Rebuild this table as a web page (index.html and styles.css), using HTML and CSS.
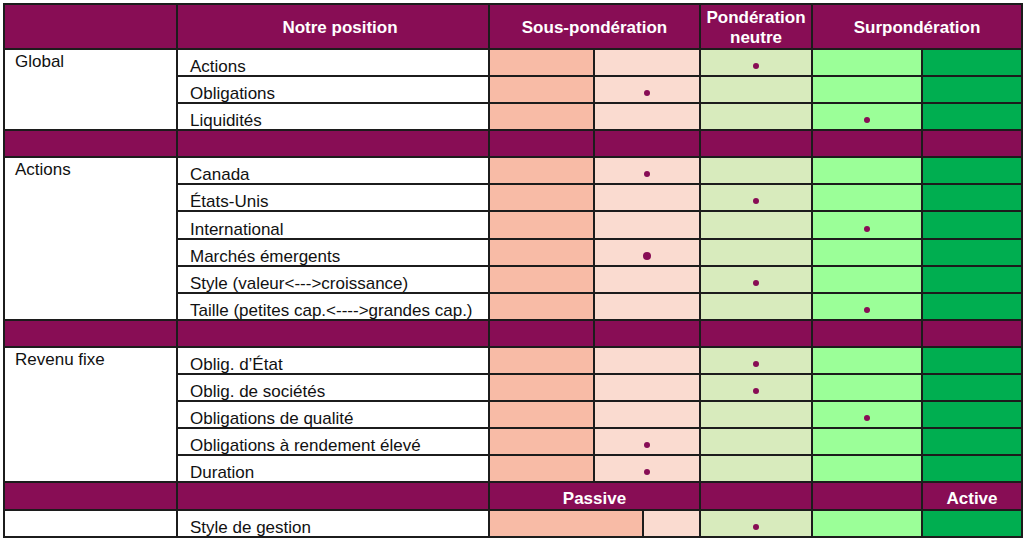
FILE: index.html
```html
<!DOCTYPE html>
<html lang="fr">
<head>
<meta charset="utf-8">
<title>Notre position</title>
<link rel="stylesheet" href="styles.css">
</head>
<body>
<table class="grid">
  <colgroup>
    <col class="c-sec"><col class="c-item"><col class="c-s1"><col class="c-s2"><col class="c-n"><col class="c-o1"><col class="c-o2">
  </colgroup>
  <thead>
    <tr class="head">
      <th></th>
      <th class="h-pos">Notre position</th>
      <th colspan="2">Sous-pondération</th>
      <th>Pondération<br>neutre</th>
      <th colspan="2">Surpondération</th>
    </tr>
  </thead>
  <tbody>
    <tr><td class="sec" rowspan="3">Global</td><td class="item">Actions</td><td class="s1"></td><td class="s2"></td><td class="n"><span class="dot"></span></td><td class="o1"></td><td class="o2"></td></tr>
    <tr><td class="item">Obligations</td><td class="s1"></td><td class="s2"><span class="dot"></span></td><td class="n"></td><td class="o1"></td><td class="o2"></td></tr>
    <tr><td class="item">Liquidités</td><td class="s1"></td><td class="s2"></td><td class="n"></td><td class="o1"><span class="dot"></span></td><td class="o2"></td></tr>
    <tr class="bar"><td></td><td></td><td></td><td></td><td></td><td></td><td></td></tr>

    <tr><td class="sec" rowspan="6">Actions</td><td class="item">Canada</td><td class="s1"></td><td class="s2"><span class="dot"></span></td><td class="n"></td><td class="o1"></td><td class="o2"></td></tr>
    <tr><td class="item">États-Unis</td><td class="s1"></td><td class="s2"></td><td class="n"><span class="dot"></span></td><td class="o1"></td><td class="o2"></td></tr>
    <tr class="tall"><td class="item">International</td><td class="s1"></td><td class="s2"></td><td class="n"></td><td class="o1"><span class="dot"></span></td><td class="o2"></td></tr>
    <tr><td class="item">Marchés émergents</td><td class="s1"></td><td class="s2"><span class="dot big"></span></td><td class="n"></td><td class="o1"></td><td class="o2"></td></tr>
    <tr><td class="item">Style (valeur&lt;---&gt;croissance)</td><td class="s1"></td><td class="s2"></td><td class="n"><span class="dot"></span></td><td class="o1"></td><td class="o2"></td></tr>
    <tr><td class="item">Taille (petites cap.&lt;----&gt;grandes cap.)</td><td class="s1"></td><td class="s2"></td><td class="n"></td><td class="o1"><span class="dot"></span></td><td class="o2"></td></tr>
    <tr class="bar"><td></td><td></td><td></td><td></td><td></td><td></td><td></td></tr>

    <tr><td class="sec" rowspan="5">Revenu fixe</td><td class="item">Oblig. d’État</td><td class="s1"></td><td class="s2"></td><td class="n"><span class="dot"></span></td><td class="o1"></td><td class="o2"></td></tr>
    <tr><td class="item">Oblig. de sociétés</td><td class="s1"></td><td class="s2"></td><td class="n"><span class="dot"></span></td><td class="o1"></td><td class="o2"></td></tr>
    <tr><td class="item">Obligations de qualité</td><td class="s1"></td><td class="s2"></td><td class="n"></td><td class="o1"><span class="dot"></span></td><td class="o2"></td></tr>
    <tr><td class="item">Obligations à rendement élevé</td><td class="s1"></td><td class="s2"><span class="dot"></span></td><td class="n"></td><td class="o1"></td><td class="o2"></td></tr>
    <tr><td class="item">Duration</td><td class="s1"></td><td class="s2"><span class="dot"></span></td><td class="n"></td><td class="o1"></td><td class="o2"></td></tr>
    <tr class="bar labels tall"><td></td><td></td><td colspan="2">Passive</td><td></td><td></td><td>Active</td></tr>

    <tr class="last"><td class="sec"></td><td class="item">Style de gestion</td><td class="split" colspan="2"></td><td class="n"><span class="dot"></span></td><td class="o1"></td><td class="o2"></td></tr>
  </tbody>
</table>
</body>
</html>
```

FILE: styles.css
```css
html, body {
  margin: 0;
  padding: 0;
  background: #ffffff;
}
body {
  font-family: "Liberation Sans", Arial, sans-serif;
  color: #111111;
}
.grid {
  margin: 3px 0 0 3px;
  width: 1018px;
  table-layout: fixed;
  border-collapse: collapse;
  font-size: 17px;
  line-height: 19px;
}
.c-sec { width: 173px; }
.c-item { width: 312px; }
.c-s1 { width: 105px; }
.c-s2 { width: 106px; }
.c-n { width: 112px; }
.c-o1 { width: 110px; }
.c-o2 { width: 100px; }

.grid th, .grid td {
  border: 2px solid #1c1c1c;
  padding: 0;
}
.head th {
  height: 40px;
  padding-top: 3px;
  background: #880d55;
  color: #ffffff;
  font-weight: bold;
  font-size: 17px;
  line-height: 20px;
  text-align: center;
  vertical-align: middle;
}
.head th.h-pos {
  padding-left: 14px;
}
.grid tbody tr { height: 27px; }
.grid tbody td { height: 25px; }
.grid tbody tr.tall td { height: 26px; }
.grid tbody tr.last { height: 25px; }
.grid tbody tr.last td { height: 23px; }

.sec {
  vertical-align: top;
  padding: 2px 0 0 10px !important;
  background: #ffffff;
}
.item {
  vertical-align: bottom;
  padding: 0 0 0 12px !important;
  background: #ffffff;
  white-space: nowrap;
  line-height: 16px;
}
.s1 { background: #f8bba6; }
.s2 { background: #fadbd0; }
.n  { background: #d8ebbd; }
.o1 { background: #9bff98; }
.o2 { background: #00ae50; }

.s2, .n, .o1 {
  text-align: center;
  vertical-align: middle;
}
.dot {
  display: inline-block;
  width: 6px;
  height: 6px;
  border-radius: 50%;
  background: #880d55;
  margin-top: 5px;
  vertical-align: middle;
}
.dot.big {
  width: 8px;
  height: 8px;
}
.bar td {
  background: #880d55;
}
.labels td {
  color: #ffffff;
  font-weight: bold;
  font-size: 17px;
  line-height: 20px;
  text-align: center;
  vertical-align: bottom;
}
.split {
  background: linear-gradient(to right,
    #f8bba6 0, #f8bba6 152px,
    #1c1c1c 152px, #1c1c1c 154px,
    #fadbd0 154px, #fadbd0 100%);
}
```
